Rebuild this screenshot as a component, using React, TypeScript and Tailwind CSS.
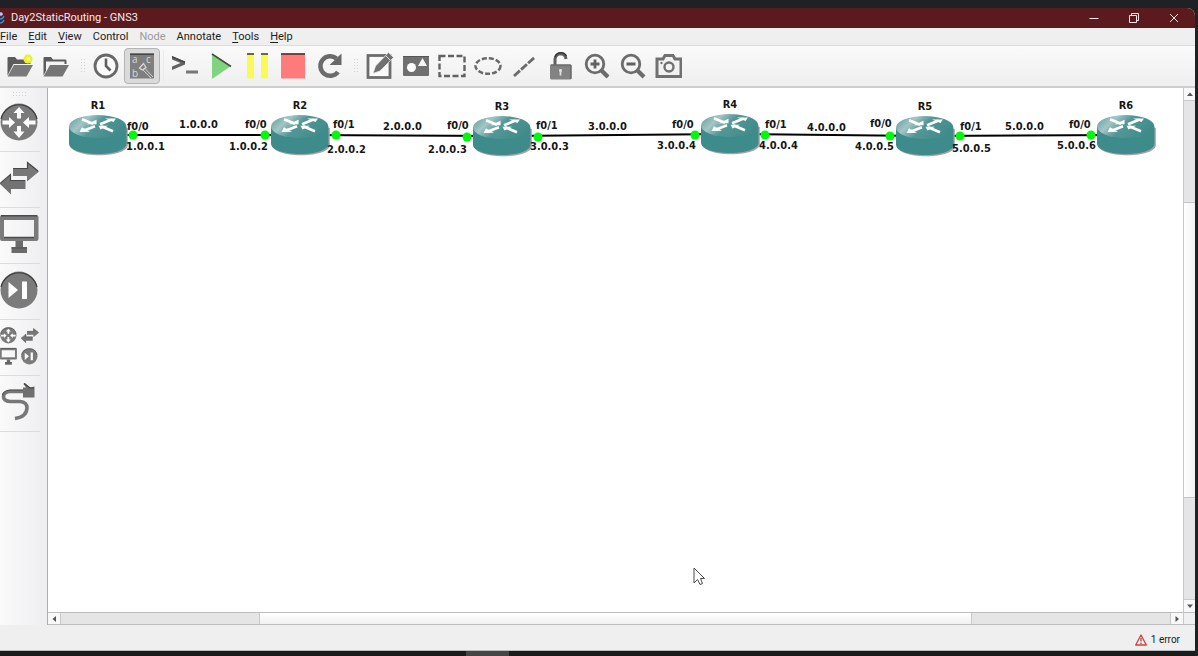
import React from "react";

type Point = { x: number; y: number };
type RouterNode = Point & { name: string };
type Label = Point & { text: string };

const routers: RouterNode[] = [
  { name: "R1", x: 50, y: 47 },
  { name: "R2", x: 252, y: 47 },
  { name: "R3", x: 454, y: 48 },
  { name: "R4", x: 682, y: 46 },
  { name: "R5", x: 877, y: 48 },
  { name: "R6", x: 1078, y: 47 },
];

const ports: Point[] = [
  { x: 85, y: 47 },
  { x: 217, y: 47 },
  { x: 288, y: 47 },
  { x: 419, y: 49 },
  { x: 490, y: 49 },
  { x: 647, y: 47 },
  { x: 717, y: 47 },
  { x: 842, y: 48 },
  { x: 912, y: 48 },
  { x: 1043, y: 47 },
];

const labels: Label[] = [
  { text: "f0/0", x: 79, y: 39 },
  { text: "1.0.0.1", x: 78, y: 59 },
  { text: "1.0.0.0", x: 131, y: 37 },
  { text: "f0/0", x: 197, y: 37 },
  { text: "1.0.0.2", x: 181, y: 59 },
  { text: "f0/1", x: 285, y: 37 },
  { text: "2.0.0.2", x: 279, y: 62 },
  { text: "2.0.0.0", x: 335, y: 39 },
  { text: "f0/0", x: 399, y: 38 },
  { text: "2.0.0.3", x: 380, y: 62 },
  { text: "f0/1", x: 488, y: 38 },
  { text: "3.0.0.3", x: 482, y: 59 },
  { text: "3.0.0.0", x: 540, y: 39 },
  { text: "f0/0", x: 624, y: 37 },
  { text: "3.0.0.4", x: 609, y: 58 },
  { text: "f0/1", x: 717, y: 37 },
  { text: "4.0.0.4", x: 711, y: 58 },
  { text: "4.0.0.0", x: 759, y: 40 },
  { text: "f0/0", x: 822, y: 36 },
  { text: "4.0.0.5", x: 807, y: 59 },
  { text: "f0/1", x: 912, y: 39 },
  { text: "5.0.0.5", x: 904, y: 61 },
  { text: "5.0.0.0", x: 957, y: 39 },
  { text: "f0/0", x: 1021, y: 37 },
  { text: "5.0.0.6", x: 1009, y: 58 },
];

const menus = ["File", "Edit", "View", "Control", "Node", "Annotate", "Tools", "Help"];
const withMnemonic = new Set(["File", "Edit", "View", "Tools", "Help"]);

function Icon({ children }: { children: React.ReactNode }) {
  return (
    <svg viewBox="0 0 28 28" className="size-7 shrink-0" fill="none" aria-hidden="true">
      {children}
    </svg>
  );
}

function ToolButton({ label, pressed, children }: { label: string; pressed?: boolean; children: React.ReactNode }) {
  return (
    <button
      type="button"
      aria-label={label}
      aria-pressed={pressed}
      className={
        pressed
          ? "flex size-9 shrink-0 items-center justify-center rounded border border-[#b4b4b4] bg-[#dadada]"
          : "flex size-9 shrink-0 items-center justify-center"
      }
    >
      <Icon>{children}</Icon>
    </button>
  );
}

function Grip({ className }: { className: string }) {
  return (
    <div className={className}>
      <svg viewBox="0 0 5 16" className="h-4 w-[5px]" aria-hidden="true">
        {[1, 4, 7, 10, 13].map((y) => (
          <g key={y} fill="#d2d2d2">
            <rect x="0" y={y} width="1" height="1" />
            <rect x="3" y={y} width="1" height="1" />
          </g>
        ))}
      </svg>
    </div>
  );
}

function FolderShape() {
  return <path d="M1.500 23.500V6Q1.500 5 2.500 5H9L11 7.500H23.500Q24.500 7.500 24.500 9V12H7.500Z" fill="#5c5c5c" />;
}

function Toolbar() {
  return (
    <div role="toolbar" aria-label="Main" className="flex h-[42px] shrink-0 items-center overflow-hidden border-b-2 border-[#cdcdcf] bg-linear-to-b from-[#fafafa] to-[#efeff0] pl-[2px]">
      <ToolButton label="New blank project">
        <FolderShape />
        <path d="M8 13H27L20.500 24.500H1.500Z" fill="#7a7a7a" />
        <circle cx="22" cy="7" r="4.500" fill="#eef02c" />
        <circle cx="22.500" cy="7" r="1.800" fill="#f9f996" />
      </ToolButton>
      <ToolButton label="Open project">
        <FolderShape />
        <path d="M4 9.500H22.500V14H8L4 20Z" fill="#f4f4f4" />
        <path d="M8 13H27L20.500 24.500H1.500Z" fill="#757575" />
      </ToolButton>
      <Grip className="flex w-[14px] shrink-0 items-center justify-center pl-1" />
      <ToolButton label="Manage snapshots">
        <circle cx="14" cy="14" r="11" fill="#fafafa" stroke="#686868" strokeWidth="2.800" />
        <path d="M14 6.500V14L18.500 18.500" stroke="#606060" strokeWidth="2.600" />
      </ToolButton>
      <ToolButton label="Show interface labels" pressed>
        <rect x="2" y="1.500" width="24" height="25" fill="#7f7f7f" />
        <rect x="2" y="1.500" width="24" height="1.500" fill="#454545" />
        <g fill="#d8d8d8" fontFamily="Open Sans, sans-serif" fontSize="10">
          <text x="4" y="11">a</text>
          <text x="18" y="11">c</text>
          <text x="4" y="25">b</text>
        </g>
        <path d="M11.500 16L15.500 11.500L18 15.500L14.500 18Z" stroke="#d8d8d8" strokeWidth="1.300" />
        <path d="M17 16.500L25 25M15 18L23 26" stroke="#d0d0d0" strokeWidth="1" />
      </ToolButton>
      <div className="mr-[3px] ml-[3px] h-8 w-px shrink-0 bg-[#ebebeb]" />
      <ToolButton label="Console connect to all nodes">
        <path d="M1 4L14 9.500V12.500L1 18V14.500L9.500 11L1 7.500Z" fill="#636363" />
        <path d="M1 4L14 9.500V11L1 5.500Z" fill="#444" />
        <rect x="15" y="18.500" width="12" height="3" fill="#777" />
      </ToolButton>
      <ToolButton label="Start all nodes">
        <path d="M5 2V27L24 14Z" fill="#80d37f" />
        <path d="M5 2L24 14.500" stroke="#41503d" strokeWidth="1.500" />
      </ToolButton>
      <ToolButton label="Suspend all nodes">
        <path d="M4 1.500H11V26.500H4ZM18 1.500H25V26.500H18Z" fill="#fafa56" />
        <path d="M4 2H11M18 2H25" stroke="#3d3b21" strokeWidth="1.500" />
      </ToolButton>
      <ToolButton label="Stop all nodes">
        <rect x="2" y="1.500" width="24" height="25" fill="#fe7b7b" />
        <path d="M2 2H26" stroke="#4d2525" strokeWidth="1.500" />
      </ToolButton>
      <ToolButton label="Reload all nodes">
        <path d="M21.500 6.500A9.800 9.800 0 1 0 23 20" stroke="#6b6b6b" strokeWidth="4.500" />
        <path d="M26.500 1.500V13H14.500Z" fill="#696969" />
      </ToolButton>
      <Grip className="flex w-[15px] shrink-0 items-center justify-center pl-1" />
      <ToolButton label="Add a note">
        <rect x="2" y="3.500" width="22" height="22" fill="#fafafa" stroke="#6d6d6d" strokeWidth="2.800" />
        <path d="M22.500 .500L27.500 5.500L14 19L7 21.500L9.500 14Z" fill="#717171" stroke="#eee" strokeWidth=".8" />
        <path d="M20 4L24 8" stroke="#ddd" strokeWidth="1" />
      </ToolButton>
      <ToolButton label="Insert a picture">
        <rect x="1" y="4" width="26" height="20" rx="1" fill="#707070" />
        <path d="M1 4.500H27" stroke="#555" />
        <circle cx="9.500" cy="15.500" r="4.500" fill="#fff" />
        <path d="M20.500 6L25 14H16Z" fill="#f6f6f6" />
      </ToolButton>
      <ToolButton label="Draw a rectangle">
        <rect x="1.500" y="4" width="25" height="20" stroke="#626262" strokeWidth="2.400" strokeDasharray="6 2.500" />
      </ToolButton>
      <ToolButton label="Draw an ellipse">
        <ellipse cx="14" cy="14" rx="12.500" ry="7.800" stroke="#696969" strokeWidth="2.500" strokeDasharray="5 2" />
      </ToolButton>
      <ToolButton label="Draw a line">
        <path d="M4 24L25 5" stroke="#6b6b6b" strokeWidth="2.800" strokeDasharray="8 1.500" />
      </ToolButton>
      <ToolButton label="Lock all items">
        <path d="M9 14V7Q10 1.800 14.500 1.800Q19.500 2 20 7" stroke="#5f5f5f" strokeWidth="3" />
        <path d="M9 5Q11 .500 15 .700Q19 1 20.500 4" stroke="#333" strokeWidth="1.200" />
        <rect x="4" y="12.500" width="21.500" height="15" rx="1.500" fill="#828282" />
        <path d="M4.500 13H25V27" stroke="#5c5c5c" strokeWidth="1" />
        <path d="M14.500 17V23.500M13 18.500H16" stroke="#dedede" strokeWidth="1.800" />
      </ToolButton>
      <ToolButton label="Zoom in">
        <circle cx="13" cy="12" r="8.800" fill="#f4f4f4" stroke="#6c6c6c" strokeWidth="2.800" />
        <path d="M19.500 18.500L26 25" stroke="#6c6c6c" strokeWidth="4.200" />
        <path d="M8.500 12H17.500M13 7.500V16.500" stroke="#606060" strokeWidth="2.800" />
      </ToolButton>
      <ToolButton label="Zoom out">
        <circle cx="13" cy="12" r="8.800" fill="#f4f4f4" stroke="#6c6c6c" strokeWidth="2.800" />
        <path d="M19.500 18.500L26 25" stroke="#6c6c6c" strokeWidth="4.200" />
        <path d="M8.500 12H17.500" stroke="#606060" strokeWidth="2.800" />
      </ToolButton>
      <ToolButton label="Take a screenshot">
        <path d="M3 24.500V7H9L11 3.500H19L21 7H27V24.500Z" fill="#f2f2f2" stroke="#717171" strokeWidth="3" />
        <circle cx="15" cy="15" r="4.500" stroke="#707070" strokeWidth="2.400" />
        <circle cx="7.500" cy="11" r="1.200" fill="#747474" />
      </ToolButton>
    </div>
  );
}

function RouterGlyph() {
  return (
    <>
      <circle cx="19" cy="19" r="18.500" fill="#7b7b7b" />
      <path d="M1 16A18.500 18.500 0 0 1 37 16" stroke="#3b3b3b" strokeWidth="1.200" fill="none" />
      <path
        d="M19 4L24.500 10H21V15.500H17V10H13.500ZM19 35L24.500 28.500H21V23H17V28.500H13.500ZM2.500 17.500H9V17.500V14L15 19.500L9 25V21.500H2.500ZM35.500 17.500H29V14L23 19.500L29 25V21.500H35.500Z"
        fill="#fff"
      />
    </>
  );
}

function SwitchGlyph() {
  return (
    <>
      <path d="M13 9H27V3L39 12.500L27 22.500V17H13Z" fill="#777" />
      <path d="M0 25L11 15.500V21H25.500V30H11V35.500Z" fill="#737373" />
      <path d="M13 9.500H27.500V3.500L38 12M0 24.500L10.500 15.500V21.500H25" stroke="#484848" strokeWidth="1.200" fill="none" />
    </>
  );
}

function MonitorGlyph() {
  return (
    <>
      <path d="M0 2Q0 0 2 0H36Q38.500 0 38.500 2V24Q38.500 26 36 26H2Q0 26 0 24ZM4 5V22H34V5Z" fill="#7b7b7b" fillRule="evenodd" />
      <path d="M1 .8H37M4 22.500H34" stroke="#4b4b4b" strokeWidth="1.500" />
      <path d="M15.500 26H23V32H27V38H11.500V32H15.500Z" fill="#6b6b6b" />
      <path d="M11.500 33H27" stroke="#505050" />
    </>
  );
}

function SecurityGlyph() {
  return (
    <>
      <circle cx="19" cy="19" r="18.500" fill="#7b7b7b" />
      <path d="M1 16A18.500 18.500 0 0 1 37 16" stroke="#3b3b3b" strokeWidth="1.200" fill="none" />
      <path d="M8.500 11L18 19L8.500 27ZM22 10.500H27V28H22Z" fill="#fff" />
    </>
  );
}

function DeviceButton({ label, children }: { label: string; children: React.ReactNode }) {
  return (
    <button type="button" aria-label={label} className="flex h-14 w-10 shrink-0 items-center border-b border-[#dcdcde] pb-[3px]">
      <svg viewBox="0 0 39 38" className="h-[38px] w-[39px]" fill="none" aria-hidden="true">
        {children}
      </svg>
    </button>
  );
}

function DeviceBar() {
  return (
    <aside aria-label="Devices" className="flex w-[47px] shrink-0 flex-col bg-linear-to-r from-[#fafafb] to-[#eeedef]">
      <svg viewBox="0 0 40 8" className="h-2 w-10 shrink-0" aria-hidden="true">
        {[13, 16, 19, 22, 25].map((x) => (
          <g key={x} fill="#d2d2d2">
            <rect x={x} y="4" width="1" height="1" />
            <rect x={x} y="7" width="1" height="1" />
          </g>
        ))}
      </svg>
      <DeviceButton label="Browse routers">
        <RouterGlyph />
      </DeviceButton>
      <DeviceButton label="Browse switches">
        <SwitchGlyph />
      </DeviceButton>
      <DeviceButton label="Browse end devices">
        <MonitorGlyph />
      </DeviceButton>
      <DeviceButton label="Browse security devices">
        <SecurityGlyph />
      </DeviceButton>
      <DeviceButton label="Browse all devices">
        <g transform="translate(0 0) scale(.44)">
          <RouterGlyph />
        </g>
        <g transform="translate(21 0) scale(.46)">
          <SwitchGlyph />
        </g>
        <g transform="translate(0 21) scale(.44)">
          <MonitorGlyph />
        </g>
        <g transform="translate(21 21) scale(.44)">
          <SecurityGlyph />
        </g>
      </DeviceButton>
      <DeviceButton label="Add a link">
        <path d="M24 8.500H10Q3.500 9 3.500 13.500T10 18.500H20Q27 19 27 25Q26.500 34 15 35.500" stroke="#777" strokeWidth="3.600" />
        <path d="M24 7H9.500Q3 8 2.500 12" stroke="#4d4d4d" strokeWidth="1" />
        <path d="M23 4.500H26L23.500 1L25 0L30 4.500L34.500 3.500V14.500H23Z" fill="#6f6f6f" />
        <path d="M24 .500L30 5H34" stroke="#444" strokeWidth="1.200" />
      </DeviceButton>
    </aside>
  );
}

function RouterSymbol({ x, y }: Point) {
  return (
    <g transform={`translate(${x - 29} ${y - 20})`}>
      <path d="M1 13V30C1 35.500 13 40.200 30 40.200S58.800 36 58.800 30V13Z" fill="#a3a3a8" />
      <path d="M0 12V28.500C0 34.500 12 39 29 39S57.500 34.500 57.500 28.500V12Z" fill="#3d8b8a" />
      <ellipse cx="28.700" cy="11.500" rx="28.700" ry="11.500" fill="url(#routerTop)" />
      <path
        d="M13 4.200L24 8.800M31 9.200L42 4.800M26 11.200L15 15.500M32 11.200L44 16.300"
        stroke="#fff"
        strokeWidth="2.600"
        fill="none"
      />
      <path d="M17.500 9.300H27.500V4.800Z" fill="#fff" />
      <path d="M36 3.500H47L44.500 7Z" fill="#fff" />
      <path d="M13 12.200L10.500 17L21 16.800Z" fill="#fff" />
      <path d="M29.500 10.700H39L31.500 14.500Z" fill="#fff" />
    </g>
  );
}

function Canvas() {
  return (
    <main className="relative min-w-0 flex-1 overflow-hidden bg-white font-['DejaVu_Sans_Condensed','DejaVu_Sans',sans-serif] text-[11px] leading-4 font-bold text-[#161616]">
      <svg className="absolute inset-0 size-full" aria-hidden="true">
        <defs>
          <linearGradient id="routerTop" x1="0" y1=".2" x2="1" y2=".6">
            <stop offset="0" stopColor="#6ba3a3" />
            <stop offset=".25" stopColor="#a3c5c5" />
            <stop offset=".5" stopColor="#529796" />
            <stop offset="1" stopColor="#3f8b8a" />
          </linearGradient>
        </defs>
        {routers.slice(1).map((r, i) => (
          <line key={r.name} x1={routers[i].x} y1={routers[i].y} x2={r.x} y2={r.y} stroke="#000" strokeWidth="2" />
        ))}
        {routers.map((r) => (
          <RouterSymbol key={r.name} x={r.x} y={r.y} />
        ))}
        {ports.map((p) => (
          <circle key={p.x} cx={p.x} cy={p.y} r="4.500" fill="#00f80b" />
        ))}
      </svg>
      {routers.map((r) => (
        <span key={r.name} className="absolute -translate-x-1/2 -translate-y-1/2" style={{ left: r.x, top: r.y - 29 }}>
          {r.name}
        </span>
      ))}
      {labels.map((l) => (
        <span key={`${l.text}-${l.x}`} className="absolute -translate-y-1/2 whitespace-nowrap" style={{ left: l.x, top: l.y }}>
          {l.text}
        </span>
      ))}
      <svg viewBox="0 0 12 19" className="absolute top-[479px] left-[645px] h-[19px] w-3" aria-hidden="true">
        <path d="M1 1V16L4.500 12.500L7 17.500L9.500 16.500L7.500 11.500H11.500Z" fill="#fff" stroke="#4c4c4c" strokeWidth="1" />
      </svg>
    </main>
  );
}

function ArrowButton({ label, d, className }: { label: string; d: string; className: string }) {
  return (
    <button type="button" aria-label={label} className={className}>
      <svg viewBox="0 0 8 8" className="size-2" aria-hidden="true">
        <path d={d} fill="#555" />
      </svg>
    </button>
  );
}

function VerticalScrollbar() {
  return (
    <div className="flex w-3 shrink-0 flex-col border-l border-[#c9c9c9] bg-[#e5e5e5]">
      <ArrowButton label="Scroll up" d="M1 6L4 2.500L7 6Z" className="flex h-[13px] shrink-0 items-center justify-center border-b border-[#c9c9c9] bg-[#f8f8f8]" />
      <div className="flex-[101]" />
      <div className="flex-[296] border-y border-[#c4c4c4] bg-linear-to-r from-white to-[#f1f1f1]" />
      <div className="flex-[101]" />
      <ArrowButton label="Scroll down" d="M1 2.500L4 6L7 2.500Z" className="flex h-[13px] shrink-0 items-center justify-center border-t border-[#c9c9c9] bg-[#f8f8f8]" />
    </div>
  );
}

function HorizontalScrollbar() {
  return (
    <div className="flex h-[13px] shrink-0 border-y border-[#bebebe] bg-[#e5e5e5]">
      <ArrowButton label="Scroll left" d="M6 1L2.500 4L6 7Z" className="flex w-[13px] shrink-0 items-center justify-center border-r border-[#c9c9c9] bg-[#f8f8f8]" />
      <div className="flex-[198]" />
      <div className="flex-[713] border-x border-[#c9c9c9] bg-linear-to-b from-white to-[#f1f1f1]" />
      <div className="flex-[198]" />
      <ArrowButton label="Scroll right" d="M2.500 1L6 4L2.500 7Z" className="flex w-[13px] shrink-0 items-center justify-center border-l border-[#c9c9c9] bg-[#f8f8f8]" />
      <div className="w-3 shrink-0 border-l border-[#c9c9c9] bg-[#f0f0f0]" />
    </div>
  );
}

function TitleBar() {
  return (
    <header className="flex h-5 shrink-0 items-center bg-[#5b1b1e] text-[#f4e9e9]">
      <svg viewBox="0 0 5 14" className="h-[14px] w-[5px] shrink-0" aria-hidden="true">
        <path d="M0 1Q4 2 4 5V10Q3 13 0 13Z" fill="#30304f" />
        <circle cx="1" cy="3" r="1.800" fill="#d0bff0" />
        <path d="M0 8Q3 8 4 5M0 12Q3 12 4 9" stroke="#4c91c8" strokeWidth="1.200" fill="none" />
      </svg>
      <h1 className="pl-[6px] text-[11px] leading-5 font-normal">Day2StaticRouting - GNS3</h1>
      <div className="ml-auto flex h-5 pr-px">
        <button type="button" aria-label="Minimize" className="flex w-10 items-center justify-center">
          <svg viewBox="0 0 10 10" className="size-[10px]" stroke="currentColor" fill="none">
            <path d="M.500 5.500H9.500" />
          </svg>
        </button>
        <button type="button" aria-label="Restore" className="flex w-10 items-center justify-center">
          <svg viewBox="0 0 10 10" className="size-[10px]" stroke="currentColor" fill="none">
            <path d="M.500 2.500H7.500V9.500H.500ZM2.500 2.500V.500H9.500V7.500H7.500" />
          </svg>
        </button>
        <button type="button" aria-label="Close" className="flex w-10 items-center justify-center">
          <svg viewBox="0 0 10 10" className="size-[10px]" stroke="currentColor" fill="none">
            <path d="M1 1L9 9M9 1L1 9" />
          </svg>
        </button>
      </div>
    </header>
  );
}

export default function App() {
  return (
    <div className="flex h-screen flex-col bg-[#202124] pt-2 pr-[3px] font-['Roboto','Open_Sans',sans-serif] text-[11px]">
      <div className="flex min-h-0 flex-1 flex-col overflow-hidden rounded-tr-lg bg-[#efefef]">
        <TitleBar />
        <nav aria-label="Menu" className="flex h-[18px] shrink-0 items-center gap-[11px] border-b border-[#dcdcdc] bg-[#efefef] pt-px leading-4 text-[#1c1c1c]">
          {menus.map((m) => (
            <button key={m} type="button" disabled={m === "Node"} className="disabled:text-[#9b9b9b]">
              {withMnemonic.has(m) ? (
                <>
                  <span className="underline underline-offset-2">{m[0]}</span>
                  {m.slice(1)}
                </>
              ) : (
                m
              )}
            </button>
          ))}
        </nav>
        <Toolbar />
        <div className="flex min-h-0 flex-1">
          <DeviceBar />
          <div className="flex min-w-0 flex-1 flex-col border-l border-[#adadad]">
            <div className="flex min-h-0 flex-1">
              <Canvas />
              <VerticalScrollbar />
            </div>
            <HorizontalScrollbar />
          </div>
        </div>
        <footer className="flex h-[26px] shrink-0 items-center justify-end gap-1 border-b border-[#bdbdbd] bg-[#efefef] pt-1 pr-[15px] text-[10px] text-[#222]">
          <svg viewBox="0 0 12 12" className="size-3" fill="none" aria-hidden="true">
            <path d="M6 1L11.300 11H.700Z" fill="#fff3f2" stroke="#d63c3c" strokeWidth="1.300" strokeLinejoin="round" />
            <path d="M6 4V7.500M6 8.500V10" stroke="#555" strokeWidth="1.200" />
          </svg>
          <span>1 error</span>
        </footer>
      </div>
      <div className="flex h-[5px] shrink-0 bg-[#1b1b1c]">
        <div className="ml-[39%] h-full w-[43px] bg-[#454545]" />
      </div>
    </div>
  );
}
